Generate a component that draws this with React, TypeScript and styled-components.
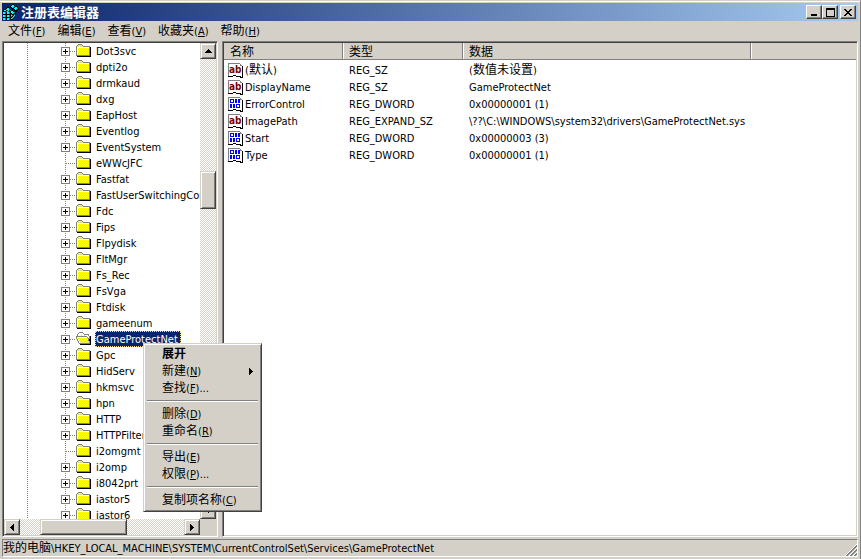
import React from 'react';
import styled, { createGlobalStyle, css } from 'styled-components';

const FACE = '#d4d0c8';
const SHADOW = '#808080';
const DARK = '#404040';

const GlobalStyle = createGlobalStyle`
  *, *::before, *::after { box-sizing: border-box; }
  html, body { margin: 0; padding: 0; background: ${FACE}; }
  body, button, table {
    font-family: "DejaVu Sans Condensed", "Noto Sans CJK SC", sans-serif;
    font-size: 11px;
    line-height: 16px;
    color: #000;
  }
  button { border: 0; margin: 0; padding: 0; background: none; text-align: left; }
  ul { list-style: none; margin: 0; padding: 0; }
`;

/* ---------- shared looks ---------- */

const raised = css`
  background: ${FACE};
  border: 1px solid;
  border-color: ${FACE} ${DARK} ${DARK} ${FACE};
  box-shadow: inset 1px 1px 0 #fff, inset -1px -1px 0 ${SHADOW};
`;

const sunken = css`
  background: #fff;
  border: 1px solid;
  border-color: ${SHADOW} #fff #fff ${SHADOW};
  padding: 1px;
  box-shadow: inset 1px 1px 0 ${DARK}, inset -1px -1px 0 ${FACE};
`;

const dotsDown = (x: number) => css`
  background: repeating-linear-gradient(${SHADOW} 0 1px, transparent 1px 2px) ${x}px 0 / 1px 100% no-repeat;
`;

/* ---------- text ---------- */

const Han = styled.span`
  font-family: "Noto Sans CJK SC", sans-serif;
  font-size: 12px;
  line-height: 1;
`;

function Mixed({ text }: { text: string }) {
  return (
    <>
      {text.split(/([\u4e00-\u9fff]+)/).map((part, i) => (i % 2 ? <Han key={i}>{part}</Han> : part))}
    </>
  );
}

function Caption({ text, accel, tail = '' }: { text: string; accel?: string; tail?: string }) {
  return (
    <span>
      <Mixed text={text} />
      {accel && (
        <>
          (<u>{accel}</u>)
        </>
      )}
      {tail}
    </span>
  );
}

/* ---------- icons ---------- */

const INK: Record<string, string> = {
  g: '#808080',
  k: '#000000',
  w: '#ffffff',
  y: '#ffff00',
  d: '#e6e66e',
  l: '#d4d0c8',
  c: '#00ffff',
  t: '#008080',
};

const PixelSvg = styled.svg`
  display: block;
  flex: none;
`;

function Pixels({ rows }: { rows: string[] }) {
  return (
    <PixelSvg width={rows[0].length} height={rows.length} shapeRendering="crispEdges" aria-hidden="true">
      {rows.flatMap((row, y) =>
        [...row].map((ch, x) =>
          INK[ch] ? <rect key={`${x}-${y}`} x={x} y={y} width="1" height="1" fill={INK[ch]} /> : null,
        ),
      )}
    </PixelSvg>
  );
}

const CLOSED_FOLDER = [
  '..gggg.........',
  '.gdydyg........',
  'gydydydggggggg.',
  'gwwwwwwwwwwwwgk',
  'gwydydydydydygk',
  'gwdydydydydydgk',
  'gwydydydydydygk',
  'gwdydydydydydgk',
  'gwydydydydydygk',
  'gwdydydydydydgk',
  'gwydydydydydygk',
  'ggggggggggggggk',
  '.kkkkkkkkkkkkkk',
];

const OPEN_FOLDER = [
  '...gggg........',
  '..gwwwwg.......',
  '.gwwwwwwggggg..',
  '.gwwwdwwdwwwg..',
  'gggggggggggwwgk',
  'gwwwwwwwwwwgwgk',
  'gwydydydydydggk',
  '.gwydydydydygkk',
  '.gwdydydydydgkk',
  '..gwydydydydygk',
  '..gwdydydydydgk',
  '...gggggggggggk',
  '....kkkkkkkkkkk',
];

const REGEDIT = [
  '.........kk.....',
  '........kcck....',
  '.......kccctkk..',
  '....kk.kkctkcck.',
  '...kcck.kkkccctk',
  '.kkccctk.k.kctkk',
  'kccktcktkk.kkkk.',
  'kkktctkkcck.kk..',
  'cctkcctkccctk...',
  'cctkcctkkctkk...',
  'kkkkkkkktkktk...',
  'cctkcctkctkck...',
  'cctkcctktkctk...',
  'kkkkkkkkkctk....',
  'cctkcctkctk.....',
  'cctkcctkkk......',
];

function PageShape() {
  return (
    <>
      <path d="M1 0H12L15 3V13H13V14H9V13H5V14H1Z" fill="#fff" />
      <path d="M0 0H12V1H1V13H0Z M12 1h1v1h1v1h-2z" fill="#808080" />
      <path d="M14 3h1v11h-1z M0 13h5v1H0z M5 12h3v1H5z M8 13h4v1H8z M12 14h3v1h-3z M12 13h1v1h-1z" fill="#000" />
    </>
  );
}

function StringIcon() {
  return (
    <PixelSvg width="16" height="16" shapeRendering="crispEdges" aria-hidden="true">
      <PageShape />
      <text x="1" y="10" fontFamily="DejaVu Sans Condensed" fontWeight="700" fontSize="10" fill="#800000">
        ab
      </text>
    </PixelSvg>
  );
}

function BinaryIcon() {
  return (
    <PixelSvg width="16" height="16" shapeRendering="crispEdges" aria-hidden="true">
      <PageShape />
      <g fill="#0000ff">
        <rect x="3" y="2" width="2" height="1" />
        <rect x="3" y="5" width="2" height="1" />
        <rect x="2" y="2" width="1" height="4" />
        <rect x="5" y="2" width="1" height="4" />
        <rect x="7" y="2" width="2" height="4" />
        <rect x="10" y="2" width="2" height="4" />
        <rect x="2" y="7" width="2" height="4" />
        <rect x="5" y="7" width="2" height="4" />
        <rect x="9" y="7" width="2" height="1" />
        <rect x="9" y="10" width="2" height="1" />
        <rect x="8" y="7" width="1" height="4" />
        <rect x="11" y="7" width="1" height="4" />
      </g>
    </PixelSvg>
  );
}

const ARROWS = {
  up: ['...k...', '..kkk..', '.kkkkk.', 'kkkkkkk'],
  down: ['kkkkkkk', '.kkkkk.', '..kkk..', '...k...'],
  left: ['...k', '..kk', '.kkk', 'kkkk', '.kkk', '..kk', '...k'],
  right: ['k...', 'kk..', 'kkk.', 'kkkk', 'kkk.', 'kk..', 'k...'],
};

const MINIMIZE = ['.........', '.........', '.........', '.........', '.........', '.........', '.kkkkkk..', '.kkkkkk..'];
const MAXIMIZE = [
  'kkkkkkkkk',
  'kkkkkkkkk',
  'k.......k',
  'k.......k',
  'k.......k',
  'k.......k',
  'k.......k',
  'k.......k',
  'kkkkkkkkk',
];
const CLOSE = ['kk....kk', '.kk..kk.', '..kkkk..', '...kk...', '..kkkk..', '.kk..kk.', 'kk....kk'];

/* ---------- window frame ---------- */

const Window = styled.main`
  display: flex;
  flex-direction: column;
  height: 100vh;
  padding: 2px;
  border-right: 1px solid ${SHADOW};
  border-top: 1px solid ${FACE};
  box-shadow: inset 0 1px 0 #fff;
  background: ${FACE};
  overflow: hidden;
  user-select: none;
`;

const TitleBar = styled.header`
  display: flex;
  align-items: center;
  gap: 2px;
  height: 18px;
  flex: none;
  padding: 0 2px 0 1px;
  background: linear-gradient(90deg, #0a246a, #a6caf0);
`;

const TitleText = styled.h1`
  flex: 1;
  margin: 0;
  font: 700 13px/18px "Noto Sans CJK SC", sans-serif;
  color: #fff;
`;

const ButtonPair = styled.div`
  display: flex;
`;

const TitleButton = styled.button`
  display: flex;
  align-items: center;
  justify-content: center;
  width: 16px;
  height: 14px;
  background: ${FACE};
  border: 1px solid;
  border-color: #fff ${DARK} ${DARK} #fff;
  box-shadow: inset -1px -1px 0 ${SHADOW};
`;

const MenuBar = styled.nav`
  display: flex;
  height: 20px;
  flex: none;
`;

const MenuBarItem = styled.button`
  padding: 2px 6px 0;
  line-height: 18px;
  white-space: nowrap;
`;

const Panes = styled.div`
  position: relative;
  flex: 1;
  min-height: 0;
  display: grid;
  grid-template-columns: 216px 1fr;
  grid-template-rows: 100%;
  gap: 4px;
`;

const StatusBar = styled.footer`
  display: flex;
  justify-content: space-between;
  flex: none;
  height: 18px;
  margin-top: 2px;
  border: 1px solid;
  border-color: ${SHADOW} #fff #fff ${SHADOW};
  line-height: 18px;
  white-space: nowrap;
`;

const SizeGrip = styled.span`
  align-self: flex-end;
`;

/* ---------- tree ---------- */

const TreePane = styled.section`
  ${sunken}
  display: grid;
  grid-template-columns: 1fr 16px;
  grid-template-rows: 1fr 16px;
  min-height: 0;
`;

const TreeView = styled.ul`
  min-width: 0;
  min-height: 0;
  overflow: hidden;
`;

const TreeRow = styled.li`
  display: flex;
  height: 16px;
  line-height: 18px;
  white-space: nowrap;
`;

const Rail = styled.span`
  flex: none;
  width: 57px;
  ${dotsDown(23)}
`;

const Joint = styled.span`
  flex: none;
  width: 9px;
  padding-top: 4px;
  ${dotsDown(4)}
`;

const Expander = styled.button`
  display: flex;
  align-items: center;
  justify-content: center;
  width: 9px;
  height: 9px;
  background: #fff;
  border: 1px solid ${SHADOW};
`;

const Branch = styled.span<{ $long: boolean }>`
  flex: none;
  width: ${p => (p.$long ? 10 : 6)}px;
  margin-left: ${p => (p.$long ? -4 : 0)}px;
  background: repeating-linear-gradient(90deg, ${SHADOW} 0 1px, transparent 1px 2px) 0 8px / 100% 1px no-repeat;
`;

const FolderSlot = styled.span`
  flex: none;
  width: 19px;
  padding-top: 1px;
`;

const KeyName = styled.span<{ $selected: boolean }>`
  padding: 0 2px 0 1px;
  ${p =>
    p.$selected &&
    css`
      background: #0a246a;
      color: #fff;
      outline: 1px dotted #f5db95;
      outline-offset: -1px;
      padding-right: 3px;
    `}
`;

const track = css`
  background: repeating-conic-gradient(#fff 0 25%, ${FACE} 0 50%) 0 0 / 2px 2px;
`;

const VerticalScroll = styled.div`
  ${track}
  display: grid;
  grid-template-rows: 16px 112fr 38px 294fr 16px;
`;

const HorizontalScroll = styled.div`
  ${track}
  display: grid;
  grid-template-columns: 16px 20fr 87px 57fr 16px;
`;

const ScrollButton = styled.button`
  ${raised}
  display: flex;
  align-items: center;
  justify-content: center;
`;

const Thumb = styled.div<{ $slot: 'row' | 'column' }>`
  ${raised}
  ${p => (p.$slot === 'row' ? 'grid-row: 3;' : 'grid-column: 3;')}
`;

const LastScrollButton = styled(ScrollButton)<{ $slot: 'row' | 'column' }>`
  ${p => (p.$slot === 'row' ? 'grid-row: 5;' : 'grid-column: 5;')}
`;

const ScrollCorner = styled.div`
  background: ${FACE};
`;

/* ---------- values ---------- */

const ListPane = styled.section`
  ${sunken}
  min-width: 0;
  overflow: hidden;
`;

const ValueTable = styled.table`
  width: 100%;
  table-layout: fixed;
  border-collapse: separate;
  border-spacing: 0;
  white-space: nowrap;
`;

const ValueRows = styled.tbody`
  &::before {
    content: '';
    display: block;
    height: 2px;
  }
`;

const Column = styled.col<{ $width?: number }>`
  ${p => p.$width && `width: ${p.$width}px;`}
`;

const HeadCell = styled.th`
  height: 16px;
  padding: 2px 6px 0;
  font-weight: 400;
  line-height: 13px;
  text-align: left;
  background: ${FACE};
  border-bottom: 1px solid ${SHADOW};
  box-shadow: inset -1px 0 0 ${SHADOW}, inset 1px 0 0 #fff;
  &:first-child { box-shadow: inset -1px 0 0 ${SHADOW}; }
  &:last-child { box-shadow: inset 1px 0 0 #fff; }
`;

const Cell = styled.td`
  height: 17px;
  padding: 0 6px;
  line-height: 17px;
`;

const NameCell = styled(Cell)`
  padding: 0 0 0 4px;
`;

const NameWrap = styled.span`
  display: flex;
  align-items: center;
  gap: 1px;
  height: 17px;
`;

/* ---------- context menu ---------- */

const ContextMenu = styled.div`
  position: absolute;
  left: 141px;
  top: 302px;
  width: 119px;
  padding: 2px;
  ${raised}
`;

const MenuItem = styled.button<{ $strong?: boolean }>`
  display: flex;
  align-items: center;
  justify-content: space-between;
  width: 100%;
  height: 17px;
  padding: 0 6px 0 16px;
  font-weight: ${p => (p.$strong ? 700 : 400)};
  line-height: 17px;
  white-space: nowrap;
`;

const Separator = styled.hr`
  height: 2px;
  margin: 3px 1px 4px;
  border: 0;
  border-top: 1px solid ${SHADOW};
  border-bottom: 1px solid #fff;
`;

/* ---------- data ---------- */

const MENUS: [string, string][] = [
  ['文件', 'F'],
  ['编辑', 'E'],
  ['查看', 'V'],
  ['收藏夹', 'A'],
  ['帮助', 'H'],
];

const KEYS = [
  'Dot3svc', 'dpti2o', 'drmkaud', 'dxg', 'EapHost', 'Eventlog', 'EventSystem', 'eWWcJFC', 'Fastfat',
  'FastUserSwitchingCompatibility', 'Fdc', 'Fips', 'Flpydisk', 'FltMgr', 'Fs_Rec', 'FsVga', 'Ftdisk',
  'gameenum', 'GameProtectNet', 'Gpc', 'HidServ', 'hkmsvc', 'hpn', 'HTTP', 'HTTPFilter', 'i2omgmt',
  'i2omp', 'i8042prt', 'iastor5', 'iastor6',
];
const LEAVES = new Set(['eWWcJFC', 'i2omgmt']);
const SELECTED = 'GameProtectNet';

const VALUES = [
  { name: '(默认)', type: 'REG_SZ', data: '(数值未设置)' },
  { name: 'DisplayName', type: 'REG_SZ', data: 'GameProtectNet' },
  { name: 'ErrorControl', type: 'REG_DWORD', data: '0x00000001 (1)' },
  { name: 'ImagePath', type: 'REG_EXPAND_SZ', data: '\\??\\C:\\WINDOWS\\system32\\drivers\\GameProtectNet.sys' },
  { name: 'Start', type: 'REG_DWORD', data: '0x00000003 (3)' },
  { name: 'Type', type: 'REG_DWORD', data: '0x00000001 (1)' },
];

const PLUS = ['..k..', '..k..', 'kkkkk', '..k..', '..k..'];

const GRIP = Array.from({ length: 12 }, (_, y) =>
  Array.from({ length: 12 }, (_, x) => {
    const d = x + y - 11;
    return d < 0 ? '.' : 'wggl'[d % 4];
  }).join(''),
);

function TreeKey({ name }: { name: string }) {
  const leaf = LEAVES.has(name);
  const selected = name === SELECTED;
  return (
    <TreeRow role="treeitem" aria-selected={selected}>
      <Rail />
      <Joint>
        {!leaf && (
          <Expander aria-label={`展开 ${name}`}>
            <Pixels rows={PLUS} />
          </Expander>
        )}
      </Joint>
      <Branch $long={leaf} />
      <FolderSlot>
        <Pixels rows={selected ? OPEN_FOLDER : CLOSED_FOLDER} />
      </FolderSlot>
      <KeyName $selected={selected}>{name}</KeyName>
    </TreeRow>
  );
}

export default function App() {
  return (
    <>
      <GlobalStyle />
      <Window>
        <TitleBar>
          <Pixels rows={REGEDIT} />
          <TitleText>注册表编辑器</TitleText>
          <ButtonPair>
            <TitleButton aria-label="最小化"><Pixels rows={MINIMIZE} /></TitleButton>
            <TitleButton aria-label="最大化"><Pixels rows={MAXIMIZE} /></TitleButton>
          </ButtonPair>
          <TitleButton aria-label="关闭"><Pixels rows={CLOSE} /></TitleButton>
        </TitleBar>

        <MenuBar>
          {MENUS.map(([text, accel]) => (
            <MenuBarItem key={accel}><Caption text={text} accel={accel} /></MenuBarItem>
          ))}
        </MenuBar>

        <Panes>
          <TreePane>
            <TreeView role="tree">
              {KEYS.map(name => <TreeKey key={name} name={name} />)}
            </TreeView>
            <VerticalScroll>
              <ScrollButton aria-label="向上滚动"><Pixels rows={ARROWS.up} /></ScrollButton>
              <Thumb $slot="row" />
              <LastScrollButton $slot="row" aria-label="向下滚动"><Pixels rows={ARROWS.down} /></LastScrollButton>
            </VerticalScroll>
            <HorizontalScroll>
              <ScrollButton aria-label="向左滚动"><Pixels rows={ARROWS.left} /></ScrollButton>
              <Thumb $slot="column" />
              <LastScrollButton $slot="column" aria-label="向右滚动"><Pixels rows={ARROWS.right} /></LastScrollButton>
            </HorizontalScroll>
            <ScrollCorner />
          </TreePane>

          <ListPane>
            <ValueTable>
              <colgroup>
                <Column $width={119} />
                <Column $width={120} />
                <Column $width={288} />
                <Column />
              </colgroup>
              <thead>
                <tr>
                  <HeadCell scope="col"><Mixed text="名称" /></HeadCell>
                  <HeadCell scope="col"><Mixed text="类型" /></HeadCell>
                  <HeadCell scope="col"><Mixed text="数据" /></HeadCell>
                  <HeadCell />
                </tr>
              </thead>
              <ValueRows>
                {VALUES.map(v => (
                  <tr key={v.name}>
                    <NameCell>
                      <NameWrap>
                        {v.type === 'REG_DWORD' ? <BinaryIcon /> : <StringIcon />}
                        <span><Mixed text={v.name} /></span>
                      </NameWrap>
                    </NameCell>
                    <Cell>{v.type}</Cell>
                    <Cell><Mixed text={v.data} /></Cell>
                    <Cell />
                  </tr>
                ))}
              </ValueRows>
            </ValueTable>
          </ListPane>

          <ContextMenu role="menu">
            <MenuItem role="menuitem" $strong><Caption text="展开" /></MenuItem>
            <MenuItem role="menuitem">
              <Caption text="新建" accel="N" />
              <Pixels rows={ARROWS.right} />
            </MenuItem>
            <MenuItem role="menuitem"><Caption text="查找" accel="F" tail="..." /></MenuItem>
            <Separator />
            <MenuItem role="menuitem"><Caption text="删除" accel="D" /></MenuItem>
            <MenuItem role="menuitem"><Caption text="重命名" accel="R" /></MenuItem>
            <Separator />
            <MenuItem role="menuitem"><Caption text="导出" accel="E" /></MenuItem>
            <MenuItem role="menuitem"><Caption text="权限" accel="P" tail="..." /></MenuItem>
            <Separator />
            <MenuItem role="menuitem"><Caption text="复制项名称" accel="C" /></MenuItem>
          </ContextMenu>
        </Panes>

        <StatusBar>
          <span><Mixed text="我的电脑\HKEY_LOCAL_MACHINE\SYSTEM\CurrentControlSet\Services\GameProtectNet" /></span>
          <SizeGrip><Pixels rows={GRIP} /></SizeGrip>
        </StatusBar>
      </Window>
    </>
  );
}
